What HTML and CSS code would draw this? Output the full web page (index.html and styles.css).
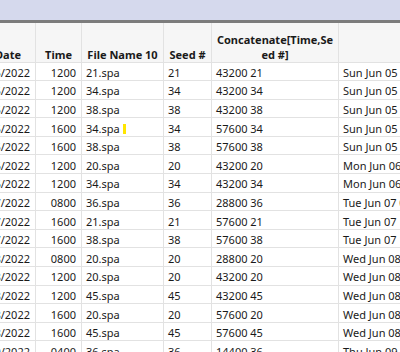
FILE: index.html
```html
<!DOCTYPE html>
<html lang="en">
<head>
    <meta charset="UTF-8">
    <title>Data Table</title>
    <link rel="stylesheet" href="styles.css">
</head>
<body>
    <div class="window">
        <div class="title-band"></div>
        <div class="splitter"></div>

        <div class="grid-view">
            <table class="data-table">
                <colgroup>
                    <col class="col-date">
                    <col class="col-time">
                    <col class="col-file">
                    <col class="col-seed">
                    <col class="col-concat">
                    <col class="col-stamp">
                </colgroup>
                <thead>
                    <tr>
                        <th class="date-head">Date</th>
                        <th>Time</th>
                        <th>File Name 10</th>
                        <th>Seed #</th>
                        <th>Concatenate[Time,Se<br>ed #]</th>
                        <th></th>
                    </tr>
                </thead>
                <tbody>
                    <tr><td class="num">06/05/2022</td><td class="num">1200</td><td>21.spa</td><td>21</td><td>43200 21</td><td>Sun Jun 05 12:00:00 2022</td></tr>
                    <tr><td class="num">06/05/2022</td><td class="num">1200</td><td>34.spa</td><td>34</td><td>43200 34</td><td>Sun Jun 05 12:00:00 2022</td></tr>
                    <tr><td class="num">06/05/2022</td><td class="num">1200</td><td>38.spa</td><td>38</td><td>43200 38</td><td>Sun Jun 05 12:00:00 2022</td></tr>
                    <tr><td class="num">06/05/2022</td><td class="num">1600</td><td>34.spa<span class="marker"></span></td><td>34</td><td>57600 34</td><td>Sun Jun 05 16:00:00 2022</td></tr>
                    <tr><td class="num">06/05/2022</td><td class="num">1600</td><td>38.spa</td><td>38</td><td>57600 38</td><td>Sun Jun 05 16:00:00 2022</td></tr>
                    <tr><td class="num">06/06/2022</td><td class="num">1200</td><td>20.spa</td><td>20</td><td>43200 20</td><td>Mon Jun 06 12:00:00 2022</td></tr>
                    <tr><td class="num">06/06/2022</td><td class="num">1200</td><td>34.spa</td><td>34</td><td>43200 34</td><td>Mon Jun 06 12:00:00 2022</td></tr>
                    <tr><td class="num">06/07/2022</td><td class="num">0800</td><td>36.spa</td><td>36</td><td>28800 36</td><td>Tue Jun 07 08:00:00 2022</td></tr>
                    <tr><td class="num">06/07/2022</td><td class="num">1600</td><td>21.spa</td><td>21</td><td>57600 21</td><td>Tue Jun 07 16:00:00 2022</td></tr>
                    <tr><td class="num">06/07/2022</td><td class="num">1600</td><td>38.spa</td><td>38</td><td>57600 38</td><td>Tue Jun 07 16:00:00 2022</td></tr>
                    <tr><td class="num">06/08/2022</td><td class="num">0800</td><td>20.spa</td><td>20</td><td>28800 20</td><td>Wed Jun 08 08:00:00 2022</td></tr>
                    <tr><td class="num">06/08/2022</td><td class="num">1200</td><td>20.spa</td><td>20</td><td>43200 20</td><td>Wed Jun 08 12:00:00 2022</td></tr>
                    <tr><td class="num">06/08/2022</td><td class="num">1200</td><td>45.spa</td><td>45</td><td>43200 45</td><td>Wed Jun 08 12:00:00 2022</td></tr>
                    <tr><td class="num">06/08/2022</td><td class="num">1600</td><td>20.spa</td><td>20</td><td>57600 20</td><td>Wed Jun 08 16:00:00 2022</td></tr>
                    <tr><td class="num">06/08/2022</td><td class="num">1600</td><td>45.spa</td><td>45</td><td>57600 45</td><td>Wed Jun 08 16:00:00 2022</td></tr>
                    <tr><td class="num">06/09/2022</td><td class="num">0400</td><td>36.spa</td><td>36</td><td>14400 36</td><td>Thu Jun 09 04:00:00 2022</td></tr>
                </tbody>
            </table>
        </div>
    </div>
</body>
</html>
```

FILE: styles.css
```css
:root {
    --band-color: #d5d9ed;
    --splitter-color: #7c7c7c;
    --header-bg: #f6f6f6;
    --grid-line: #e2e2e2;
    --text-color: #1a1a1a;
}

body {
    margin: 0;
    background: #ffffff;
    font-family: 'Noto Sans', 'Open Sans', sans-serif;
    color: var(--text-color);
    overflow: hidden;
}

.window {
    width: 400px;
    height: 352px;
    overflow: hidden;
    display: flex;
    flex-direction: column;
}

.title-band {
    height: 20px;
    background: var(--band-color);
    flex-shrink: 0;
}

.splitter {
    height: 3px;
    background: var(--splitter-color);
    flex-shrink: 0;
}

.grid-view {
    flex: 1;
    overflow: hidden;
}

/* the grid is scrolled a little to the right, so the date column is cut */
.data-table {
    border-collapse: collapse;
    table-layout: fixed;
    width: 560px;
    margin-left: -45px;
    font-size: 11px;
}

.col-date { width: 80px; }
.col-time { width: 46px; }
.col-file { width: 82px; }
.col-seed { width: 48px; }
.col-concat { width: 127px; }
.col-stamp { width: 177px; }

.data-table th,
.data-table td {
    border: 1px solid var(--grid-line);
    padding: 0 4px;
    white-space: nowrap;
    overflow: hidden;
    text-align: left;
}

.data-table thead tr {
    height: 39px;
}

.data-table th {
    background: var(--header-bg);
    border-top: none;
    font-weight: bold;
    text-align: center;
    vertical-align: bottom;
    line-height: 15px;
    padding-bottom: 0;
}

.data-table th.date-head {
    text-align: right;
    padding-right: 14px;
}

.data-table tbody tr {
    height: 18.6px;
}

.data-table td {
    line-height: 15px;
    padding-top: 2px;
}

.data-table .num {
    text-align: right;
    padding-right: 5px;
}

.marker {
    display: inline-block;
    width: 3px;
    height: 10px;
    margin-left: 3px;
    background: #ffe600;
    vertical-align: -1px;
}
```
